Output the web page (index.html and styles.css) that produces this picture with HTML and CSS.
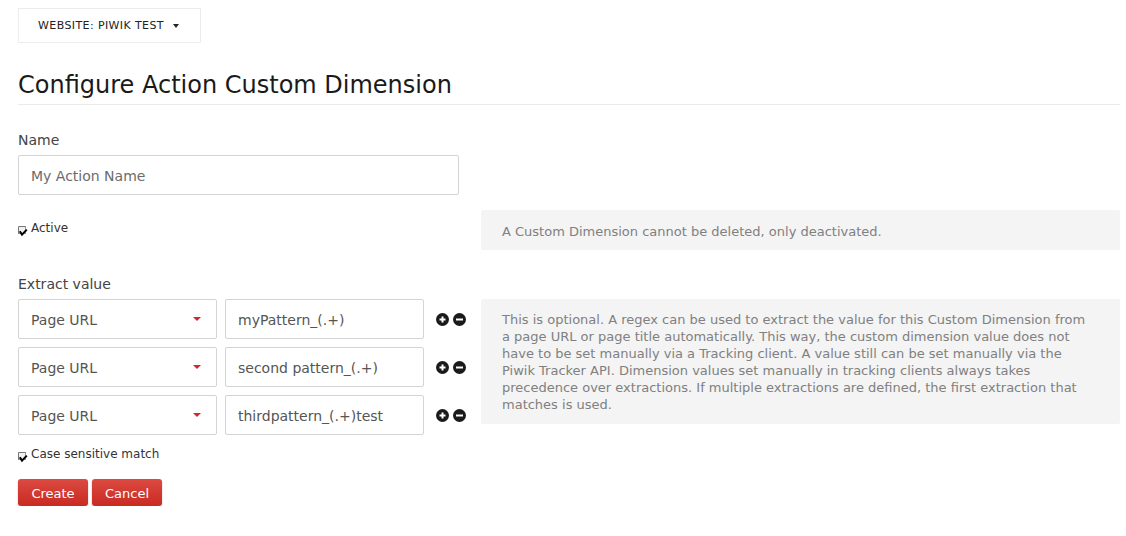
FILE: index.html
```html
<!DOCTYPE html>
<html>
<head>
<meta charset="utf-8">
<link rel="stylesheet" href="styles.css">
</head>
<body>
<div class="page">
  <div class="site-selector">
    <span>WEBSITE: PIWIK TEST</span>
    <span class="site-caret"></span>
  </div>

  <h2 class="title">Configure Action Custom Dimension</h2>

  <div class="field">
    <div class="label">Name</div>
    <div class="text-input placeholder">My Action Name</div>
  </div>

  <div class="form-row row-active">
    <div class="left">
      <div class="check">
        <svg class="check-icon" width="11" height="12" viewBox="0 0 11 12">
          <rect x="0.5" y="0.5" width="7" height="7" fill="#f0f0f0" stroke="#9a9a9a"/>
          <path d="M1 0.5 H7.5 M0.5 1 V7.5" stroke="#777" stroke-width="1"/>
          <path d="M1.8 5.2 L4 8.6 L8.8 3.6" fill="none" stroke="#000" stroke-width="2"/>
        </svg>
        <span>Active</span>
      </div>
    </div>
    <div class="help help-short">A Custom Dimension cannot be deleted, only deactivated.</div>
  </div>

  <div class="label label-extract">Extract value</div>

  <div class="form-row">
    <div class="left">
      <div class="extractions">
        <div class="extraction">
          <div class="select"><span>Page URL</span><span class="sel-caret"></span></div>
          <div class="text-input value">myPattern_(.+)</div>
          <div class="actions">
            <svg width="13" height="13" viewBox="0 0 13 13"><circle cx="6.5" cy="6.5" r="6.5" fill="#1a1a1a"/><rect x="3.5" y="5.5" width="6" height="2" fill="#fff"/><rect x="5.5" y="3.5" width="2" height="6" fill="#fff"/></svg>
            <svg width="13" height="13" viewBox="0 0 13 13"><circle cx="6.5" cy="6.5" r="6.5" fill="#1a1a1a"/><rect x="3" y="5.5" width="7" height="2" fill="#fff"/></svg>
          </div>
        </div>
        <div class="extraction">
          <div class="select"><span>Page URL</span><span class="sel-caret"></span></div>
          <div class="text-input value">second pattern_(.+)</div>
          <div class="actions">
            <svg width="13" height="13" viewBox="0 0 13 13"><circle cx="6.5" cy="6.5" r="6.5" fill="#1a1a1a"/><rect x="3.5" y="5.5" width="6" height="2" fill="#fff"/><rect x="5.5" y="3.5" width="2" height="6" fill="#fff"/></svg>
            <svg width="13" height="13" viewBox="0 0 13 13"><circle cx="6.5" cy="6.5" r="6.5" fill="#1a1a1a"/><rect x="3" y="5.5" width="7" height="2" fill="#fff"/></svg>
          </div>
        </div>
        <div class="extraction">
          <div class="select"><span>Page URL</span><span class="sel-caret"></span></div>
          <div class="text-input value">thirdpattern_(.+)test</div>
          <div class="actions">
            <svg width="13" height="13" viewBox="0 0 13 13"><circle cx="6.5" cy="6.5" r="6.5" fill="#1a1a1a"/><rect x="3.5" y="5.5" width="6" height="2" fill="#fff"/><rect x="5.5" y="3.5" width="2" height="6" fill="#fff"/></svg>
            <svg width="13" height="13" viewBox="0 0 13 13"><circle cx="6.5" cy="6.5" r="6.5" fill="#1a1a1a"/><rect x="3" y="5.5" width="7" height="2" fill="#fff"/></svg>
          </div>
        </div>
      </div>
      <div class="check check-case">
        <svg class="check-icon" width="11" height="12" viewBox="0 0 11 12">
          <rect x="0.5" y="0.5" width="7" height="7" fill="#f0f0f0" stroke="#9a9a9a"/>
          <path d="M1 0.5 H7.5 M0.5 1 V7.5" stroke="#777" stroke-width="1"/>
          <path d="M1.8 5.2 L4 8.6 L8.8 3.6" fill="none" stroke="#000" stroke-width="2"/>
        </svg>
        <span>Case sensitive match</span>
      </div>
    </div>
    <div class="help help-long">This is optional. A regex can be used to extract the value for this Custom Dimension from a page URL or page title automatically. This way, the custom dimension value does not have to be set manually via a Tracking client. A value still can be set manually via the Piwik Tracker API. Dimension values set manually in tracking clients always takes precedence over extractions. If multiple extractions are defined, the first extraction that matches is used.</div>
  </div>

  <div class="buttons">
    <button class="btn">Create</button>
    <button class="btn">Cancel</button>
  </div>
</div>
</body>
</html>
```

FILE: styles.css
```css
* { box-sizing: border-box; }
html, body { margin: 0; padding: 0; background: #fff; }
body {
  font-family: "DejaVu Sans", Verdana, sans-serif;
  color: #333;
}
.page {
  padding: 8px 6px 0 18px;
}
.site-selector {
  display: inline-flex;
  align-items: center;
  width: 183px;
  height: 35px;
  border: 1px solid #ececec;
  padding-left: 19px;
  font-size: 11px;
  color: #222;
  letter-spacing: 0.4px;
}
.site-caret {
  margin-left: 9px;
  width: 0; height: 0;
  border-left: 3px solid transparent;
  border-right: 3px solid transparent;
  border-top: 4px solid #222;
}
.title {
  margin: 27px 0 0;
  font-size: 24px;
  font-weight: normal;
  line-height: 30px;
  color: #1a1a1a;
  padding-bottom: 4px;
  border-bottom: 1px solid #eaeaea;
}
.field { margin-top: 25px; }
.label {
  font-size: 14px;
  line-height: 20px;
  color: #444;
}
.field .label { margin-bottom: 5px; }
.text-input {
  height: 40px;
  border: 1px solid #d4d4d4;
  border-radius: 2px;
  padding: 2px 0 0 12px;
  display: flex;
  align-items: center;
  font-size: 14px;
}
.field .text-input { width: 441px; }
.placeholder { color: #6b6b6b; }
.value { color: #555; width: 199px; }

.form-row {
  display: grid;
  grid-template-columns: 463px 1fr;
  align-items: start;
}
.row-active { margin-top: 15px; }
.row-active .left { padding-top: 10px; }

.check {
  display: flex;
  align-items: flex-start;
  font-size: 12px;
  line-height: 17px;
  color: #333;
}
.check-icon { margin-top: 6px; margin-right: 2px; flex: none; }

.help {
  background: #f4f4f4;
  border-radius: 2px;
  padding: 12px 30px 11px 21px;
  font-size: 13px;
  line-height: 17px;
  color: #808080;
}
.help-short { padding-top: 13px; padding-bottom: 10px; }

.label-extract { margin-top: 24px; margin-bottom: 5px; }

.extractions {
  display: flex;
  flex-direction: column;
  gap: 8px;
}
.extraction {
  display: flex;
  align-items: center;
  gap: 8px;
}
.select {
  width: 199px;
  height: 40px;
  border: 1px solid #d4d4d4;
  border-radius: 2px;
  padding: 2px 15px 0 12px;
  display: flex;
  align-items: center;
  justify-content: space-between;
  font-size: 14px;
  color: #555;
}
.sel-caret {
  width: 0; height: 0;
  border-left: 4px solid transparent;
  border-right: 4px solid transparent;
  border-top: 4px solid #d4252a;
  margin-bottom: 2px;
}
.actions {
  display: flex;
  gap: 4px;
  margin-left: 4px;
}
.actions svg { display: block; }
.check-case { margin-top: 11px; }

.buttons {
  margin-top: 15px;
  display: flex;
  gap: 4px;
}
.btn {
  font-family: "DejaVu Sans", Verdana, sans-serif;
  font-size: 13px;
  color: #fff;
  height: 27px;
  width: 70px;
  border: none;
  border-radius: 3px;
  background: linear-gradient(#dc4a41, #c92a22);
  box-shadow: 0 1px 2px rgba(0,0,0,0.25);
  padding: 1px 0 0;
}
```
